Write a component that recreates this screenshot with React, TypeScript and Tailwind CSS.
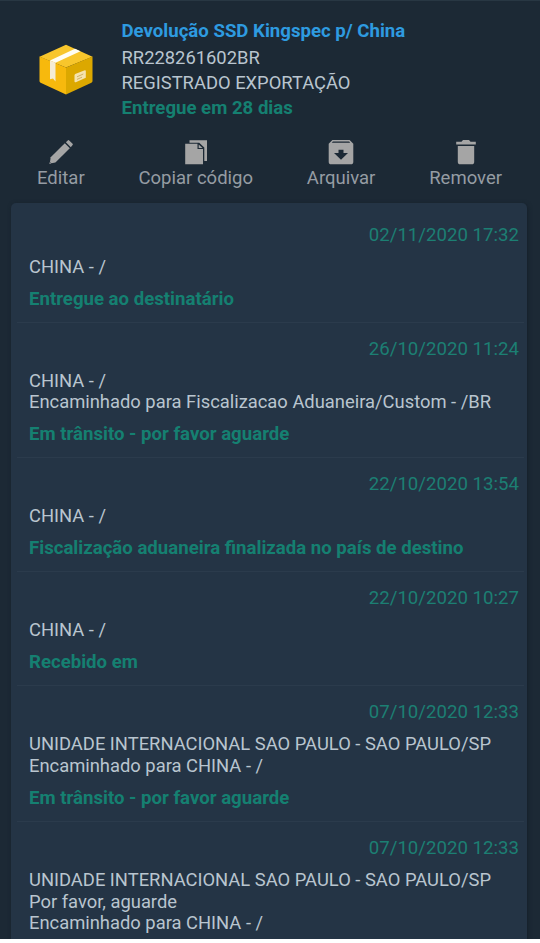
import type { ReactNode } from 'react'

type TrackingEvent = {
  date: string
  lines: string[]
  status?: string
}

const events: TrackingEvent[] = [
  { date: '02/11/2020 17:32', lines: ['CHINA - /'], status: 'Entregue ao destinatário' },
  {
    date: '26/10/2020 11:24',
    lines: ['CHINA - /', 'Encaminhado para Fiscalizacao Aduaneira/Custom - /BR'],
    status: 'Em trânsito - por favor aguarde',
  },
  {
    date: '22/10/2020 13:54',
    lines: ['CHINA - /'],
    status: 'Fiscalização aduaneira finalizada no país de destino',
  },
  { date: '22/10/2020 10:27', lines: ['CHINA - /'], status: 'Recebido em' },
  {
    date: '07/10/2020 12:33',
    lines: ['UNIDADE INTERNACIONAL SAO PAULO - SAO PAULO/SP', 'Encaminhado para CHINA - /'],
    status: 'Em trânsito - por favor aguarde',
  },
  {
    date: '07/10/2020 12:33',
    lines: [
      'UNIDADE INTERNACIONAL SAO PAULO - SAO PAULO/SP',
      'Por favor, aguarde',
      'Encaminhado para CHINA - /',
    ],
  },
]

const PackageIcon = () => (
  <svg className="h-[52px] w-[54px]" viewBox="0 0 54 52">
    <path d="M27 0.8 53.5 12.8 27 23.5 0.5 12.8z" fill="#f8c62c" />
    <path d="M0.5 12.5 27 23.5V50.5L1.6 38.8Q.5 38.2.5 37z" fill="#f7b90d" />
    <path d="M53.5 12.5 27 23.5V50.5L52.4 38.8Q53.5 38.2 53.5 37z" fill="#dca800" />
    <path d="M36 4.8 41.5 7.3 16.5 18.8 11 16.5z" fill="#fffdf3" />
    <path d="M11 16.5 16.5 18.8V37.5L14 34.5 11 35.2z" fill="#f5ecd5" />
    <path d="M36.2 30 45.8 26.3Q46.8 26 46.8 27V33.8L36.8 38.2Q35.5 38.5 35.5 37.5V31z" fill="#f5e3ae" />
    <path d="M38 32.8 44.3 30M38 35.4 43 33.2" stroke="#c5a553" strokeWidth="0.8" />
  </svg>
)

const EditIcon = () => (
  <svg className="size-[26px]" viewBox="0 0 26 26" fill="currentColor">
    <path d="M16.8 4.3 21.8 9.3 7.4 23.4 3.4 24.3 2 22.9 2.7 18.3z" />
    <path d="M17.9 3.3 20 1.3Q20.6.8 21.2 1.4L24.6 4.8Q25.2 5.5 24.6 6.1L22.8 8.2z" />
    <path d="M1.3 25 1.8 23 3.2 24.5z" />
  </svg>
)

const CopyIcon = () => (
  <svg className="size-[26px]" viewBox="0 0 26 26" fill="currentColor">
    <path d="M6.5 1.2H24V22H21.3V8.5L16.2 3.8H6.5z" />
    <path d="M2.2 4.7H14.5V10H20V25.3H2.2z" />
    <path d="M15.7 5.5 19.5 9H15.7z" />
  </svg>
)

const ArchiveIcon = () => (
  <svg className="size-[26px]" viewBox="0 0 26 26" fill="currentColor">
    <path
      fillRule="evenodd"
      d="M4.4 1H21.6L25.3 4.8V22.7Q25.3 25.3 22.7 25.3H3.3Q.7 25.3.7 22.7V4.8zM4.9 2.5 3.8 3.8H22.2L21.1 2.5zM10.5 10.8V14H6L13 20.7 20 14H15.5V10.8z"
    />
  </svg>
)

const TrashIcon = () => (
  <svg className="size-[26px]" viewBox="0 0 26 26" fill="currentColor">
    <path d="M4.8 7H21.2V22.7Q21.2 25.3 18.6 25.3H7.4Q4.8 25.3 4.8 22.7zM3.2 2.7H8.5L10 1.1H16L17.5 2.7H22.8V5.5H3.2z" />
  </svg>
)

const Action = ({ label, children }: { label: string; children: ReactNode }) => (
  <button type="button" className="flex flex-col items-center text-[18.5px] leading-[26px] text-[#959ca3]">
    <span className="text-[#a5a5a5]">{children}</span>
    {label}
  </button>
)

const EventRow = ({ event }: { event: TrackingEvent }) => (
  <li className="mr-[3px] ml-[6px] border-b border-[#2b3b4c] pr-[5px] pb-[12px] pl-[12px]">
    <div className="pt-[15px] text-right text-[18.65px] leading-[22px] text-[#1c7f73]">{event.date}</div>
    <div className="pt-[10px] leading-[21.6px]">
      {event.lines.map((line) => (
        <p key={line}>{line}</p>
      ))}
    </div>
    {event.status && (
      <p className="pt-[10.4px] text-[18.63px] leading-[22px] font-bold text-[#158071]">
        {event.status}
      </p>
    )}
  </li>
)

export default function App() {
  return (
    <div className="h-[943px] overflow-hidden bg-white font-[Roboto,sans-serif] text-[18.38px] text-[#b9c5cf]">
      <div className="flex h-[939px] flex-col overflow-hidden border-t border-[#283743] bg-[#1c2935]">
        <header className="flex items-center pt-[18.4px] pl-[39px]">
          <PackageIcon />
          <div className="ml-[28.5px] leading-[25.4px]">
            <h1 className="text-[18.62px] font-bold text-[#2e9be0]">Devolução SSD Kingspec p/ China</h1>
            <p>RR228261602BR</p>
            <p>REGISTRADO EXPORTAÇÃO</p>
            <p className="text-[18.62px] font-bold text-[#158071]">Entregue em 28 dias</p>
          </div>
        </header>

        <nav className="flex justify-between pt-[17.6px] pr-[38px] pl-[37px]">
          <Action label="Editar">
            <EditIcon />
          </Action>
          <Action label="Copiar código">
            <CopyIcon />
          </Action>
          <Action label="Arquivar">
            <ArchiveIcon />
          </Action>
          <Action label="Remover">
            <TrashIcon />
          </Action>
        </nav>

        <ul className="mt-[12px] mr-[13px] ml-[11px] flex-1 rounded-t-[5px] bg-[#243445] pt-[6.3px] shadow-[1px_1px_4px_#15202a]">
          {events.map((event, i) => (
            <EventRow key={i} event={event} />
          ))}
        </ul>
      </div>
    </div>
  )
}
